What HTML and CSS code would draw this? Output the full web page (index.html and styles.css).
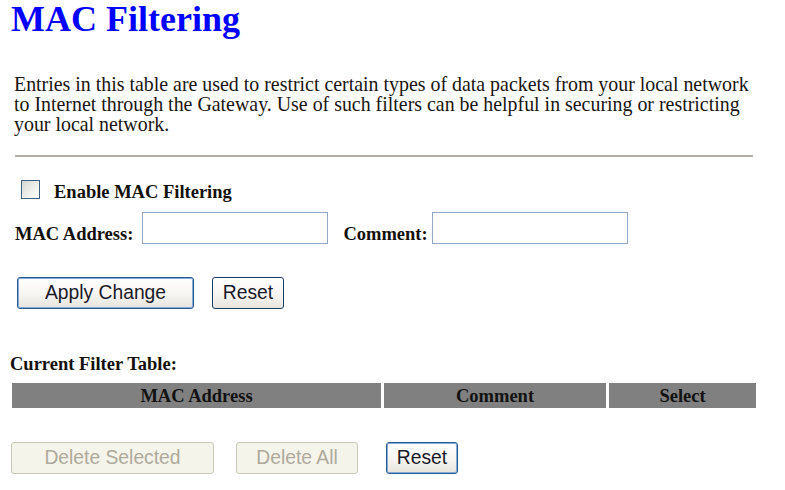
FILE: index.html
```html
<!DOCTYPE html>
<html>
<head>
<meta charset="utf-8">
<title>MAC Filtering</title>
<link rel="stylesheet" href="styles.css">
</head>
<body>
<div class="page">
  <h1 class="title">MAC Filtering</h1>
  <p class="intro">Entries in this table are used to restrict certain types of data packets from your local network<br>to Internet through the Gateway. Use of such filters can be helpful in securing or restricting<br>your local network.</p>
  <div class="rule"></div>

  <div class="check-row">
    <span class="checkbox"></span>
    <span class="label enable-label">Enable MAC Filtering</span>
  </div>

  <div class="field-row">
    <span class="label field-label mac-label">MAC Address:</span>
    <span class="input input-mac"></span>
    <span class="label field-label comment-label">Comment:</span>
    <span class="input input-comment"></span>
  </div>

  <div class="btn-row top-buttons">
    <button class="btn btn-default btn-apply">Apply Change</button>
    <button class="btn btn-reset">Reset</button>
  </div>

  <div class="label table-title">Current Filter Table:</div>
  <div class="filter-table">
    <div class="th">MAC Address</div>
    <div class="th">Comment</div>
    <div class="th">Select</div>
  </div>

  <div class="btn-row bottom-buttons">
    <button class="btn btn-disabled btn-del-sel" disabled>Delete Selected</button>
    <button class="btn btn-disabled btn-del-all" disabled>Delete All</button>
    <button class="btn btn-default btn-reset2">Reset</button>
  </div>
</div>
</body>
</html>
```
FILE: styles.css
```css
html, body {
  margin: 0;
  padding: 0;
  background: #ffffff;
}
body {
  font-family: "Liberation Serif", "Times New Roman", serif;
  color: #000000;
}
.page {
  padding-left: 10px;
  padding-top: 1px;
}
.title {
  margin: 0;
  padding-left: 1px;
  font-size: 36px;
  line-height: 36px;
  font-weight: bold;
  color: #0000ff;
}
.intro {
  margin: 37px 0 0 4px;
  font-size: 19.9px;
  line-height: 20px;
  color: #1a1410;
  white-space: nowrap;
}
.rule {
  margin: 21px 0 0 5px;
  width: 738px;
  border-top: 2px solid #b4b0a4;
}
.label {
  font-weight: bold;
  font-size: 18.5px;
  color: #14100c;
}
.check-row {
  display: flex;
  align-items: flex-start;
  margin-top: 23px;
}
.checkbox {
  box-sizing: border-box;
  width: 19px;
  height: 19px;
  margin-left: 11px;
  border: 1px solid #3f5e80;
  background: linear-gradient(135deg, #d6d6d0 0%, #f2f2ee 60%, #ffffff 100%);
}
.enable-label {
  margin-left: 14px;
  line-height: 24px;
}
.field-row {
  display: flex;
  align-items: flex-end;
  margin-top: 8px;
}
.field-label {
  line-height: 20px;
}
.mac-label {
  margin-left: 5px;
  margin-right: 9px;
}
.comment-label {
  margin-left: 15px;
  margin-right: 4px;
}
.input {
  box-sizing: border-box;
  height: 32px;
  border: 1px solid #91a7c2;
  background: #ffffff;
}
.input-mac { width: 186px; }
.input-comment { width: 196px; }

.btn-row {
  display: flex;
  align-items: center;
}
.top-buttons {
  margin-top: 33px;
  padding-left: 7px;
  gap: 18px;
}
.btn {
  box-sizing: border-box;
  height: 32px;
  margin: 0;
  padding: 0;
  border: 1px solid #1c3d66;
  border-radius: 3px;
  background: linear-gradient(to bottom, #ffffff 0%, #f6f5f1 55%, #e6e4dc 100%);
  font-family: "Liberation Sans", Arial, sans-serif;
  font-size: 19.3px;
  color: #1a1a2a;
  text-align: center;
}
.btn-default {
  border-color: #2a5a94;
  box-shadow: inset 0 0 0 1px #86a9d8;
}
.btn-apply { width: 177px; }
.btn-reset { width: 72px; }
.table-title {
  margin-top: 45px;
  line-height: 20px;
}
.filter-table {
  display: grid;
  grid-template-columns: 369px 222px 147px;
  column-gap: 3px;
  margin: 9px 0 0 2px;
}
.th {
  height: 25px;
  line-height: 26px;
  background: #808080;
  text-align: center;
  font-weight: bold;
  font-size: 18.5px;
  color: #121212;
}
.bottom-buttons {
  margin-top: 34px;
  padding-left: 1px;
}
.btn-disabled {
  border-color: #cac8bb;
  background: #f5f4ea;
  color: #aeaa9c;
  box-shadow: none;
}
.btn-del-sel { width: 203px; }
.btn-del-all { width: 122px; margin-left: 22px; }
.btn-reset2 { width: 72px; margin-left: 28px; }
```
